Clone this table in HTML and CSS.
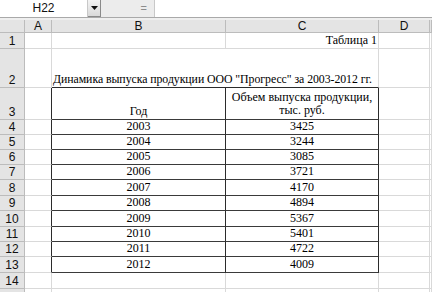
FILE: index.html
```html
<!DOCTYPE html>
<html>
<head>
<meta charset="utf-8">
<link rel="stylesheet" href="styles.css">
</head>
<body>
<div class="fbar">
  <div class="namebox">H22</div>
  <div class="dd"><svg width="7" height="4" viewBox="0 0 7 4"><path d="M0 0H7L3.5 4Z" fill="#111"/></svg></div>
  <div class="eqarea"><span class="eq">=</span></div>
  <div class="finput"></div>
</div>
<div class="band"></div>
<div class="sheet">
  <div class="h corner"></div><div class="h">A</div><div class="h">B</div><div class="h">C</div><div class="h">D</div><div class="h"></div>

  <div class="h rh">1</div><div class="c"></div><div class="c"></div><div class="c t right">Таблица 1</div><div class="c"></div><div class="c"></div>

  <div class="h rh">2</div><div class="c"></div><div class="c t title tb-b">Динамика выпуска продукции ООО "Прогресс" за 2003-2012 гг.</div><div class="c"></div><div class="c"></div>

  <div class="h rh">3</div><div class="c tl"></div><div class="c t tc">Год</div><div class="c t tc wrap">Объем выпуска продукции,<br>тыс. руб.</div><div class="c"></div><div class="c"></div>

  <div class="h rh">4</div><div class="c tl"></div><div class="c t tc">2003</div><div class="c t tc">3425</div><div class="c"></div><div class="c"></div>
  <div class="h rh">5</div><div class="c tl"></div><div class="c t tc">2004</div><div class="c t tc">3244</div><div class="c"></div><div class="c"></div>
  <div class="h rh">6</div><div class="c tl"></div><div class="c t tc">2005</div><div class="c t tc">3085</div><div class="c"></div><div class="c"></div>
  <div class="h rh">7</div><div class="c tl"></div><div class="c t tc">2006</div><div class="c t tc">3721</div><div class="c"></div><div class="c"></div>
  <div class="h rh">8</div><div class="c tl"></div><div class="c t tc">2007</div><div class="c t tc">4170</div><div class="c"></div><div class="c"></div>
  <div class="h rh">9</div><div class="c tl"></div><div class="c t tc">2008</div><div class="c t tc">4894</div><div class="c"></div><div class="c"></div>
  <div class="h rh">10</div><div class="c tl"></div><div class="c t tc">2009</div><div class="c t tc">5367</div><div class="c"></div><div class="c"></div>
  <div class="h rh">11</div><div class="c tl"></div><div class="c t tc">2010</div><div class="c t tc">5401</div><div class="c"></div><div class="c"></div>
  <div class="h rh">12</div><div class="c tl"></div><div class="c t tc">2011</div><div class="c t tc">4722</div><div class="c"></div><div class="c"></div>
  <div class="h rh">13</div><div class="c tl"></div><div class="c t tc">2012</div><div class="c t tc">4009</div><div class="c"></div><div class="c"></div>

  <div class="h rh">14</div><div class="c"></div><div class="c"></div><div class="c"></div><div class="c"></div><div class="c"></div>
  <div class="h rh"></div><div class="c"></div><div class="c"></div><div class="c"></div><div class="c"></div><div class="c"></div>
</div>
</body>
</html>
```
FILE: styles.css
```css
* { box-sizing: border-box; }
html, body { margin: 0; padding: 0; background: #fff; overflow: hidden; }
body { width: 432px; height: 292px; font-family: "Liberation Sans", Arial, sans-serif; }

.fbar {
  display: flex;
  height: 18px;
  border-bottom: 1px solid #a9a9a9;
  background: #fff;
}
.namebox {
  width: 88px;
  border-right: 1px solid #c8c8c8;
  font-size: 12px;
  line-height: 17px;
  text-align: center;
  color: #111;
}
.dd {
  width: 13px;
  display: flex;
  align-items: center;
  justify-content: center;
  background: linear-gradient(#f4f4f4, #d9d9d9);
  border-right: 1px solid #8a8a8a;
  border-bottom: 1px solid #8a8a8a;
}
.eqarea {
  width: 54px;
  background: #ececec;
  display: flex;
  align-items: center;
  justify-content: flex-end;
  padding-right: 7px;
  border-right: 1px solid #c8c8c8;
}
.eq { font-size: 11px; color: #8c8c8c; line-height: 11px; }
.finput { flex: 1; background: #fff; }

.band { height: 2px; background: #efefef; }

.sheet {
  display: grid;
  grid-template-columns: 25px 27px 174px 153px 51px 1fr;
  grid-template-rows: 13px 16px 39px 32px 15px 15px 15px 15px 16px 15px 16px 15px 15px 16px 16px 16px;
}

.h {
  background: #e4e4e4;
  border-right: 1px solid #bcbcbc;
  border-bottom: 1px solid #bcbcbc;
  font-size: 12px;
  line-height: 12px;
  color: #111;
  text-align: center;
}
.rh { display: flex; align-items: flex-end; justify-content: center; padding-bottom: 1px; }
.corner { background: #e4e4e4; }

.c {
  border-right: 1px solid #d9d9d9;
  border-bottom: 1px solid #d9d9d9;
}
.t {
  font-family: "Liberation Serif", "Times New Roman", serif;
  font-size: 12px;
  line-height: 13px;
  color: #000;
  display: flex;
  align-items: flex-end;
  padding-bottom: 1px;
}
.right { justify-content: flex-end; padding-right: 1px; }
.title {
  grid-column: span 2;
  white-space: nowrap;
  padding-left: 1px;
  font-size: 11.8px;
  letter-spacing: -0.05px;
  border-right-color: #d9d9d9;
}
.tb-b { border-bottom-color: #2b2b2b; }
.tl { border-right-color: #2b2b2b; }
.tc {
  justify-content: center;
  text-align: center;
  border-right-color: #2b2b2b;
  border-bottom-color: #3a3a3a;
}
.wrap { padding-bottom: 2px; }
```
